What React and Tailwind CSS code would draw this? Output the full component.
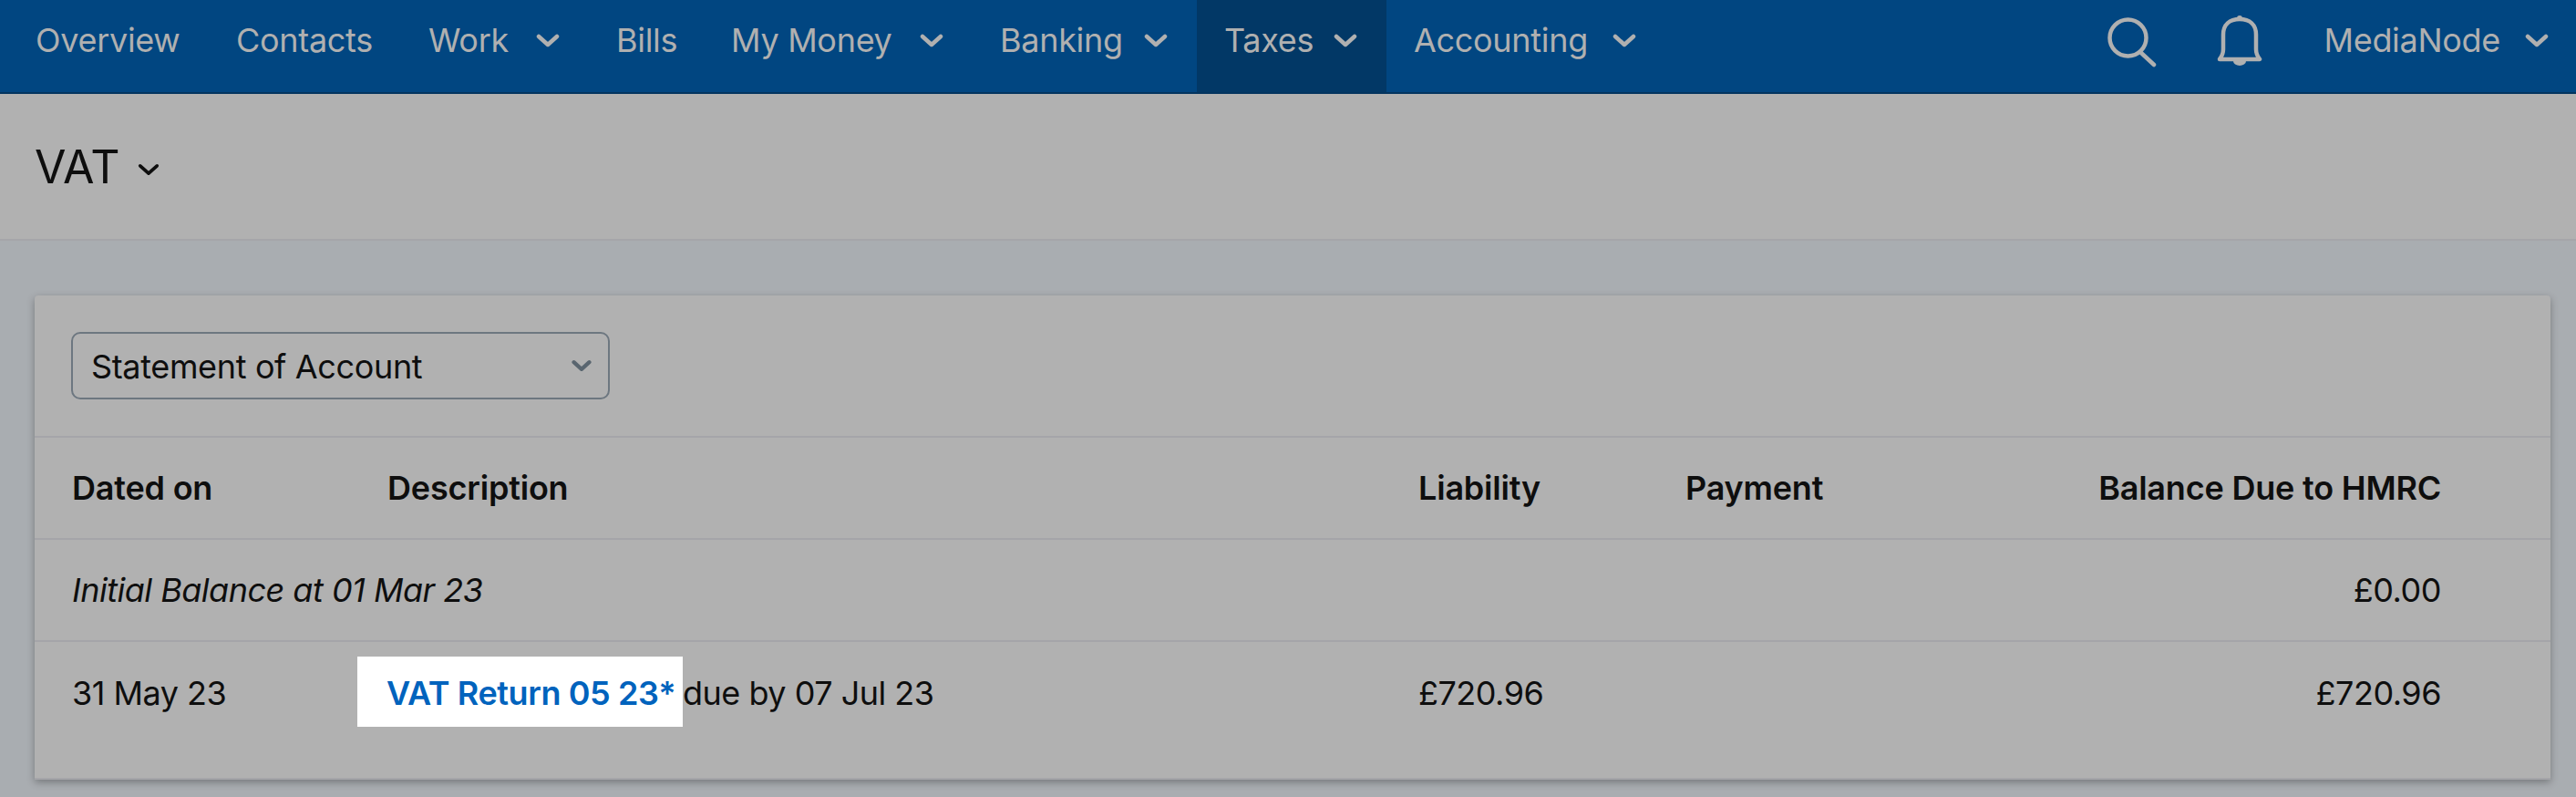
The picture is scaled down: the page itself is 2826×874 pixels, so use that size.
// VAT statement page, dimmed behind a spotlight on the return link
const font = { fontFamily: '"Inter", "Open Sans", sans-serif' };

const Chevron = ({ className = "w-[26px] h-[15px]", color = "#b0b0b0", sw = 4.5 }) => (
  <svg viewBox="0 0 26 15" className={className} fill="none" stroke={color} strokeWidth={sw} strokeLinecap="round" strokeLinejoin="round">
    <path d="M3 3 L13 12 L23 3" />
  </svg>
);

const SearchIcon = () => (
  <svg viewBox="0 0 54 55" className="w-[54px] h-[55px]" fill="none" stroke="#b0b0b0" strokeWidth="4.5" strokeLinecap="round">
    <circle cx="22.5" cy="22.5" r="20" />
    <path d="M37 39 L51 52" />
  </svg>
);

const BellIcon = () => (
  <svg viewBox="0 0 50 56" className="w-[50px] h-[56px]" fill="none" stroke="#b0b0b0" strokeWidth="4.5" strokeLinejoin="round">
    <path d="M3 49 C3 49 7 44 7 38 V22 C7 11 14 5 25 5 C36 5 43 11 43 22 V38 C43 44 47 49 47 49 Z" />
    <circle cx="25" cy="4" r="3" fill="#b0b0b0" stroke="none" />
    <path d="M18 51 a7 5 0 0 0 14 0 z" fill="#b0b0b0" stroke="none" />
  </svg>
);

const navItems = [
  { label: "Overview", w: "w-[160px]" },
  { label: "Contacts", w: "w-[151px]" },
  { label: "Work", w: "w-[90px]", menu: true },
  { label: "Bills", w: "w-[66px]" },
  { label: "My Money", w: "w-[179px]", menu: true },
  { label: "Banking", w: "w-[130px]", menu: true },
  { label: "Taxes", w: "w-[92px]", menu: true, active: true },
  { label: "Accounting", w: "w-[190px]", menu: true },
];

const NavItem = ({ label, w, menu, active }) => (
  <div className={`flex h-[101px] items-start gap-[28px] pt-[17px] pl-[30px] ${menu ? "pr-[32px]" : "pr-[30px]"} ${active ? "bg-[#023866]" : ""}`}>
    <span className={`${w} whitespace-nowrap text-[36px] leading-[54px] text-[#b0b0b0] tracking-[-0.3px]`}>{label}</span>
    {menu && <div className="mt-[20px]"><Chevron /></div>}
  </div>
);

const cols = "grid grid-cols-[346px_1131px_293px_1fr_auto] items-center h-[112px] pl-[41px] pr-[120px] border-b-2 border-[#a5a5a9] text-[36px] text-[#0e0e0e]";

export default function App() {
  return (
    <div className="min-h-screen bg-[#a9adb1]" style={font}>
      {/* Top navigation */}
      <nav className="flex h-[103px] items-start justify-between border-b-2 border-[#03345f] bg-[#014681] pl-[9px]">
        <div className="flex">
          {navItems.map((item) => (
            <NavItem key={item.label} {...item} />
          ))}
        </div>
        <div className="flex items-start pr-[30px]">
          <div className="mt-[19px]"><SearchIcon /></div>
          <div className="mt-[16px] ml-[66px]"><BellIcon /></div>
          <span className="ml-[67px] pt-[17px] text-[36px] leading-[54px] text-[#b0b0b0] tracking-[-0.3px]">MediaNode</span>
          <div className="mt-[37px] ml-[27px]"><Chevron /></div>
        </div>
      </nav>

      {/* Page title */}
      <header className="flex h-[161px] items-center gap-[19px] border-b-2 border-[#a5a5a9] bg-[#b1b1b1] pl-[38px]">
        <h1 className="text-[50px] leading-none font-normal text-[#0e0e0e]">VAT</h1>
        <div className="mt-[6px]"><Chevron className="w-[24px] h-[14px]" color="#0e0e0e" sw="4" /></div>
      </header>

      <main className="pt-[60px] pr-[28px] pl-[38px]">
        <div className="rounded-t-[4px] bg-[#b1b1b1] shadow-[0_3px_8px_rgba(0,0,0,0.3)]">
          <div className="h-[156px] border-b-2 border-[#a5a5a9] pt-[40px] pl-[40px]">
            <div className="flex h-[74px] w-[591px] items-center justify-between rounded-[10px] border-2 border-[#6d7780] pr-[18px] pl-[20px] text-[36px] text-[#0e0e0e] tracking-[-0.35px]">
              <span className="pt-[2px]">Statement of Account</span>
              <Chevron className="w-[22px] h-[14px]" color="#59656f" sw="5" />
            </div>
          </div>

          <div className={`${cols} font-semibold tracking-[-0.2px]`}>
            <span>Dated on</span>
            <span>Description</span>
            <span>Liability</span>
            <span>Payment</span>
            <span>Balance Due to HMRC</span>
          </div>

          <div className={`${cols} tracking-[-0.5px]`}>
            <span className="col-span-4 italic">Initial Balance at 01 Mar 23</span>
            <span>£0.00</span>
          </div>

          <div className={`${cols} h-[151px] items-start border-b-0 pt-[16px] tracking-[-0.5px]`}>
            <span className="pt-[16px] leading-[48px]">31 May 23</span>
            <span className="-ml-[33px] flex items-start leading-[48px]">
              <a className="flex h-[77px] w-[357px] items-start bg-white pt-[16px] pl-[32px] font-semibold tracking-[-0.4px] whitespace-nowrap text-[#0063bd]">VAT Return 05 23*</a>
              <span className="pt-[16px]">due by 07 Jul 23</span>
            </span>
            <span className="pt-[16px] leading-[48px]">£720.96</span>
            <span />
            <span className="pt-[16px] leading-[48px]">£720.96</span>
          </div>
        </div>
      </main>
    </div>
  );
}
